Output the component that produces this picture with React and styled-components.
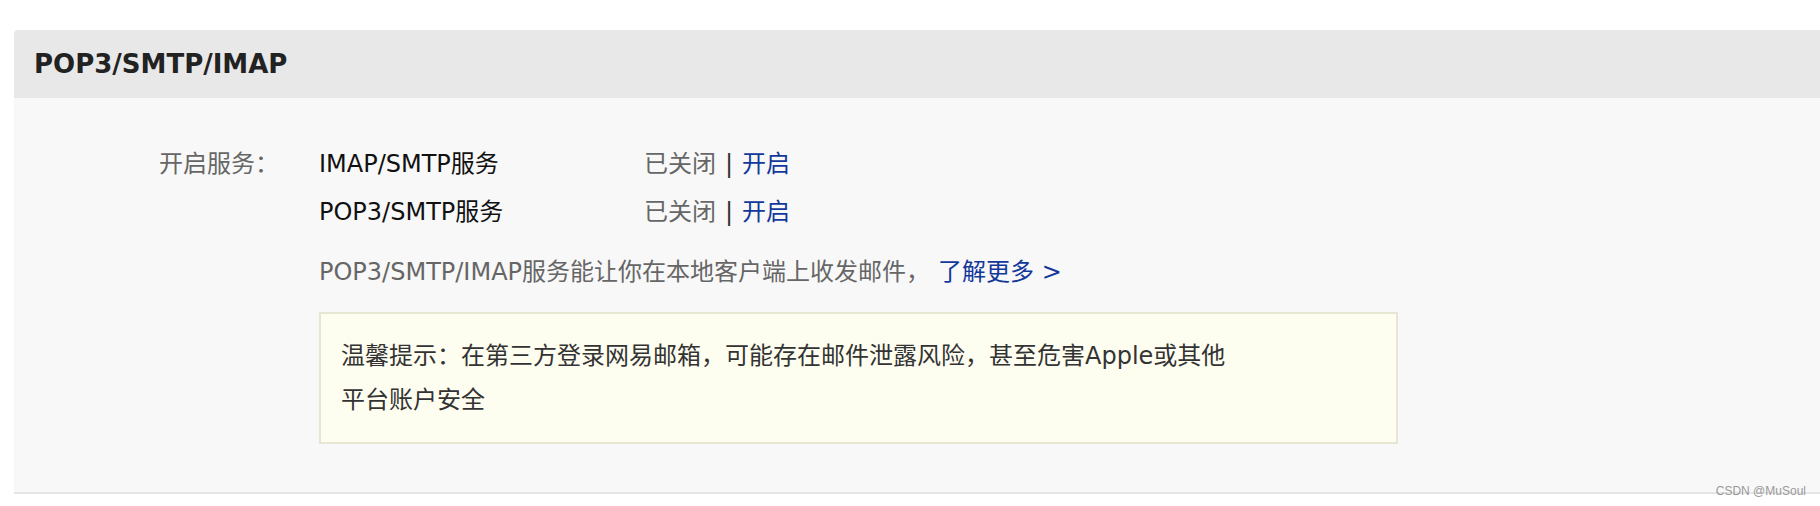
import React from 'react';
import styled, { createGlobalStyle } from 'styled-components';

const GlobalStyle = createGlobalStyle`
    html, body {
        margin: 0;
        padding: 0;
        background: #ffffff;
    }
    body {
        font-family: "DejaVu Sans", Verdana, "Noto Sans CJK SC", sans-serif;
    }
`

//Page holds the settings panel, which runs off the right edge
const Page = styled.div`
    position: relative;
    padding: 30px 0 12px 14px;
    min-height: 506px;
    box-sizing: border-box;
`

const Panel = styled.section`
    background-color: #f8f8f8;
    border-top-left-radius: 4px;
    border-bottom: 2px solid #e6e6e6;
    overflow: hidden;
`

const PanelHeader = styled.div`
    display: flex;
    align-items: center;
    height: 68px;
    padding-left: 20px;
    background-color: #e8e8e8;
`

const PanelTitle = styled.h2`
    margin: 0;
    font-family: "DejaVu Sans", Verdana, sans-serif;
    font-size: 26px;
    font-weight: bold;
    color: #222222;
`

//PanelBody contains the label column and the service column
const PanelBody = styled.div`
    display: grid;
    grid-template-columns: 160px 1fr;
    padding: 42px 0 48px 145px;
    font-size: 24px;
    line-height: 48px;
`

const FieldLabel = styled.div`
    color: #666666;
`

const FieldContent = styled.div`
    display: flex;
    flex-direction: column;
`

const ServiceRow = styled.div`
    display: flex;
`

const ServiceName = styled.span`
    width: 325px;
    color: #111111;
`

const ServiceStatus = styled.span`
    color: #666666;
`

const Separator = styled.span`
    margin: 0 9px;
    color: #333333;
`

const ActionLink = styled.a`
    margin-left: ${(props) => props.$gap || 0}px;
    color: #13389a;
    text-decoration: none;
    cursor: pointer;
`

const Description = styled.p`
    margin: 12px 0 0;
    color: #666666;
`

const TipBox = styled.div`
    width: 1079px;
    box-sizing: border-box;
    margin-top: 16px;
    padding: 20px 20px;
    background-color: #fdfdf0;
    border: 2px solid #e6e6d2;
`

const TipText = styled.p`
    margin: 0;
    max-width: 895px;
    line-height: 44px;
    color: #333333;
`

const Watermark = styled.span`
    position: absolute;
    right: 14px;
    bottom: 8px;
    font-family: "Liberation Sans", Arial, sans-serif;
    font-size: 12px;
    color: #9a9a9a;
`

const services = [
    { name: 'IMAP/SMTP服务', status: '已关闭' },
    { name: 'POP3/SMTP服务', status: '已关闭' },
]

const App = () => {
    return (
        <Page>
            <GlobalStyle />
            <Panel>
                <PanelHeader>
                    <PanelTitle>POP3/SMTP/IMAP</PanelTitle>
                </PanelHeader>
                <PanelBody>
                    <FieldLabel>开启服务：</FieldLabel>
                    <FieldContent>
                        {services.map((service) => (
                            <ServiceRow key={service.name}>
                                <ServiceName>{service.name}</ServiceName>
                                <ServiceStatus>{service.status}</ServiceStatus>
                                <Separator>|</Separator>
                                <ActionLink>开启</ActionLink>
                            </ServiceRow>
                        ))}
                        <Description>
                            POP3/SMTP/IMAP服务能让你在本地客户端上收发邮件，<ActionLink $gap={8}>了解更多 &gt;</ActionLink>
                        </Description>
                        <TipBox>
                            <TipText>
                                温馨提示：在第三方登录网易邮箱，可能存在邮件泄露风险，甚至危害Apple或其他平台账户安全
                            </TipText>
                        </TipBox>
                    </FieldContent>
                </PanelBody>
            </Panel>
            <Watermark>CSDN @MuSoul</Watermark>
        </Page>
    )
}

export default App;
